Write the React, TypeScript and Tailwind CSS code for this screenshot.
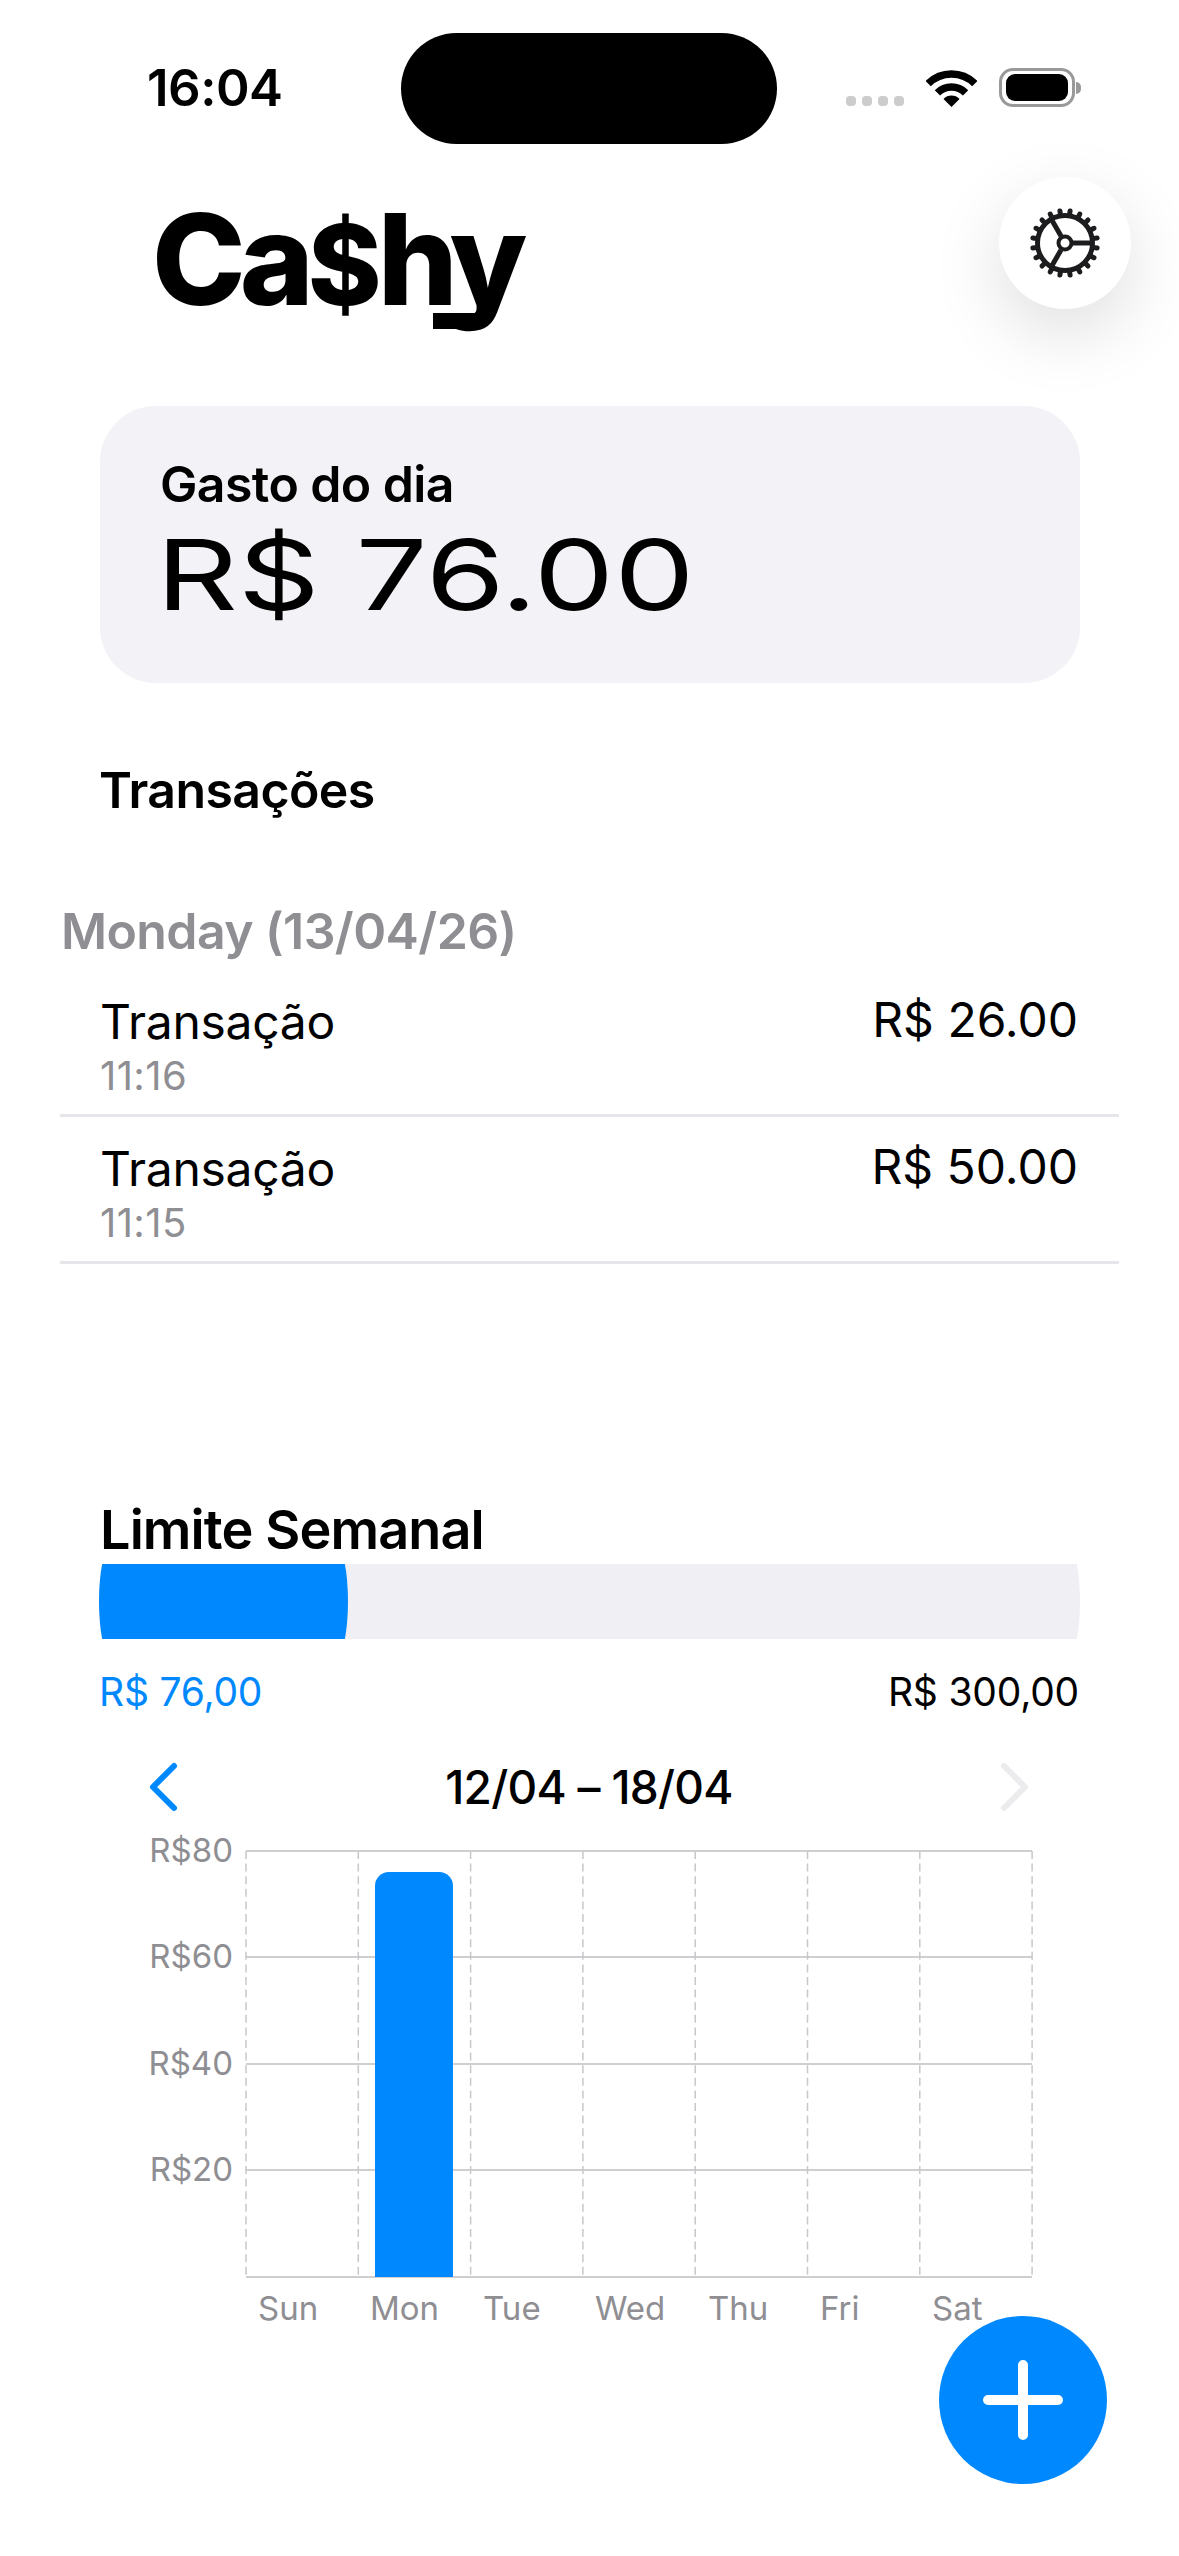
const teeth = Array.from({ length: 20 }, (_, i) => i * 18 + 9);

function Gear() {
  return (
    <svg width="72" height="72" viewBox="-36 -36 72 72" fill="none" stroke="#1c1c1e">
      <circle r="27.5" strokeWidth="5" />
      {teeth.map((a) => (
        <line key={a} x1="28" y1="0" x2="32.5" y2="0" strokeWidth="5" strokeLinecap="round" transform={`rotate(${a})`} />
      ))}
      <circle r="6.5" strokeWidth="4" fill="#fff" />
      <line x1="8" y1="0" x2="27" y2="0" strokeWidth="5" />
      <line x1="8" y1="0" x2="27" y2="0" strokeWidth="5" transform="rotate(120)" />
      <line x1="8" y1="0" x2="27" y2="0" strokeWidth="5" transform="rotate(240)" />
    </svg>
  );
}

function Wifi() {
  return (
    <svg width="51" height="37" viewBox="0 0 51 37" fill="none" stroke="#000" strokeWidth="7.5">
      <path d="M2.2 13.7A33 33 0 0 1 48.8 13.7" />
      <path d="M11.4 22.9A20 20 0 0 1 39.6 22.9" />
      <path d="M25.5 37L17.5 29A11 11 0 0 1 33.5 29Z" fill="#000" stroke="none" />
    </svg>
  );
}

function Chart() {
  const xs = Array.from({ length: 8 }, (_, i) => 246 + i * 112.3);
  const ys = [
    { y: 1851, t: "R$80" },
    { y: 1957, t: "R$60" },
    { y: 2064, t: "R$40" },
    { y: 2170, t: "R$20" },
  ];
  const days = [
    ["Sun", 258],
    ["Mon", 370],
    ["Tue", 483],
    ["Wed", 595],
    ["Thu", 708],
    ["Fri", 820],
    ["Sat", 932],
  ] as const;
  return (
    <svg width="1179" height="530" viewBox="0 1813 1179 530" className="block">
      {ys.map((l) => (
        <line key={l.y} x1="246" x2="1032" y1={l.y} y2={l.y} stroke="#cfcfd2" strokeWidth="2" />
      ))}
      <line x1="246" x2="1032" y1="2277" y2="2277" stroke="#cfcfd2" strokeWidth="2" />
      {xs.map((x) => (
        <line key={x} x1={x} x2={x} y1="1851" y2="2277" stroke="#c8c8cc" strokeWidth="1.5" strokeDasharray="8 4.6" />
      ))}
      <path d="M375 2277V1886A14 14 0 0 1 389 1872H439A14 14 0 0 1 453 1886V2277Z" fill="#0088ff" />
      {ys.map((l) => (
        <text key={l.t} x="233" y={l.y + 11} textAnchor="end" fontSize="33" fill="#8e8e93" fontFamily="Inter, sans-serif">
          {l.t}
        </text>
      ))}
      {days.map(([d, x]) => (
        <text key={d} x={x} y="2320" fontSize="33" fill="#8e8e93" fontFamily="Inter, sans-serif">
          {d}
        </text>
      ))}
    </svg>
  );
}

function Row({ amount, time }: { amount: string; time: string }) {
  return (
    <div className="flex justify-between border-b-[3px] border-[#e5e5ea] pt-[24px] pb-[16px] pl-[40px] pr-[41px]">
      <div className="flex flex-col gap-[4px]">
        <span className="text-[48px] leading-[56px] text-black tracking-[-0.3px]">Transação</span>
        <span className="text-[40px] leading-[44px] text-[#8e8e93] tracking-[0.4px]">{time}</span>
      </div>
      <span className="mt-[-2px] text-[48px] leading-[56px] text-black">{amount}</span>
    </div>
  );
}

export default function App() {
  return (
    <div className="relative flex h-[2556px] w-[1179px] flex-col overflow-hidden bg-white font-['Inter',sans-serif]">
      {/* status bar */}
      <div className="flex h-[144px] pt-[33px]">
        <div className="w-[401px] pl-[147px] pt-[27px] text-[51px] font-semibold leading-[56px] tracking-[-0.5px] text-black">16:04</div>
        <div className="h-[111px] w-[376px] rounded-full bg-black" />
        <div className="flex h-[74px] items-end pl-[69px]">
          <div className="mb-[1px] flex gap-[6px]">
            <span className="size-[10px] rounded-[4px] bg-[#cccccc]" />
            <span className="size-[10px] rounded-[4px] bg-[#cccccc]" />
            <span className="size-[10px] rounded-[4px] bg-[#cccccc]" />
            <span className="size-[10px] rounded-[4px] bg-[#cccccc]" />
          </div>
          <div className="ml-[22px]">
            <Wifi />
          </div>
          <div className="ml-[22px] flex items-center">
            <div className="flex h-[39px] w-[76px] items-center justify-center rounded-[14px] border-[3.5px] border-[#999999]">
              <div className="h-[27px] w-[62px] rounded-[9px] bg-black" />
            </div>
            <div className="ml-[1px] h-[12px] w-[5px] rounded-r-full bg-[#999999]" />
          </div>
        </div>
      </div>

      {/* header */}
      <div className="mt-[33px] flex h-[132px] justify-between pl-[152px] pr-[48px]">
        <div className="relative h-[132px]">
          <span className="mt-[12px] block text-[126px] font-extrabold leading-[140px] tracking-[-6px] text-black">
            Ca<span className="text-[112px] tracking-[-4px]">$</span>hy
          </span>
          <span className="absolute left-[281px] top-[136px] h-[16px] w-[52px] rounded-br-[14px] bg-black" />
        </div>
        <div className="flex size-[132px] items-center justify-center rounded-full bg-white shadow-[0_24px_70px_rgba(0,0,0,0.13)]">
          <Gear />
        </div>
      </div>

      {/* daily card */}
      <div className="ml-[100px] mt-[97px] h-[277px] w-[980px] rounded-[56px] bg-[#f2f2f7] pl-[60px] pt-[50px]">
        <div className="text-[50px] font-semibold leading-[56px] tracking-[-0.6px] text-black">Gasto do dia</div>
        <div className="ml-[-4px] mt-[13px] origin-left scale-x-[1.3] text-[98px] font-normal leading-[100px] text-black">R$ 76.00</div>
      </div>

      <div className="ml-[99px] mt-[79px] text-[50px] font-semibold leading-[56px] tracking-[-0.6px] text-black">Transações</div>
      <div className="ml-[61px] mt-[85px] text-[50px] font-semibold leading-[56px] tracking-[-0.6px] text-[#8e8e93]">Monday (13/04/26)</div>

      <div className="ml-[60px] mt-[11px] w-[1059px]">
        <Row amount="R$ 26.00" time="11:16" />
        <Row amount="R$ 50.00" time="11:15" />
      </div>

      <div className="ml-[100px] mt-[236px] text-[54px] font-semibold leading-[60px] tracking-[-0.9px] text-black">Limite Semanal</div>
      <div className="ml-[99px] mt-[4px] h-[75px] w-[981px] overflow-hidden">
        <div className="mt-[-18px] h-[111px] w-full rounded-[12px/55.5px] bg-[#f0f0f4]">
          <div className="h-full w-[249px] rounded-[12px/55.5px] bg-[#0088ff]" />
        </div>
      </div>
      <div className="ml-[99px] mt-[31px] flex w-[980px] justify-between text-[39px] leading-[44px] tracking-[-0.2px]">
        <span className="text-[#0088ff]">R$ 76,00</span>
        <span className="text-black">R$ 300,00</span>
      </div>

      <div className="ml-[148px] mt-[47px] flex h-[52px] w-[882px] items-center justify-between">
        <svg width="30" height="50" viewBox="0 0 30 50" fill="none" stroke="#0088ff" strokeWidth="6" strokeLinecap="round" strokeLinejoin="round">
          <path d="M26 4L5 25L26 46" />
        </svg>
        <span className="text-[46px] font-medium leading-[52px] tracking-[-0.7px] text-black">12/04 – 18/04</span>
        <svg width="30" height="50" viewBox="0 0 30 50" fill="none" stroke="#ececee" strokeWidth="6" strokeLinecap="round" strokeLinejoin="round">
          <path d="M4 4L25 25L4 46" />
        </svg>
      </div>

      <Chart />

      {/* add button */}
      <div className="absolute left-[939px] top-[2316px] flex size-[168px] items-center justify-center rounded-full bg-[#0088ff]">
        <svg width="80" height="80" viewBox="0 0 80 80" stroke="#fff" strokeWidth="10" strokeLinecap="round">
          <path d="M40 5V75M5 40H75" />
        </svg>
      </div>
    </div>
  );
}
